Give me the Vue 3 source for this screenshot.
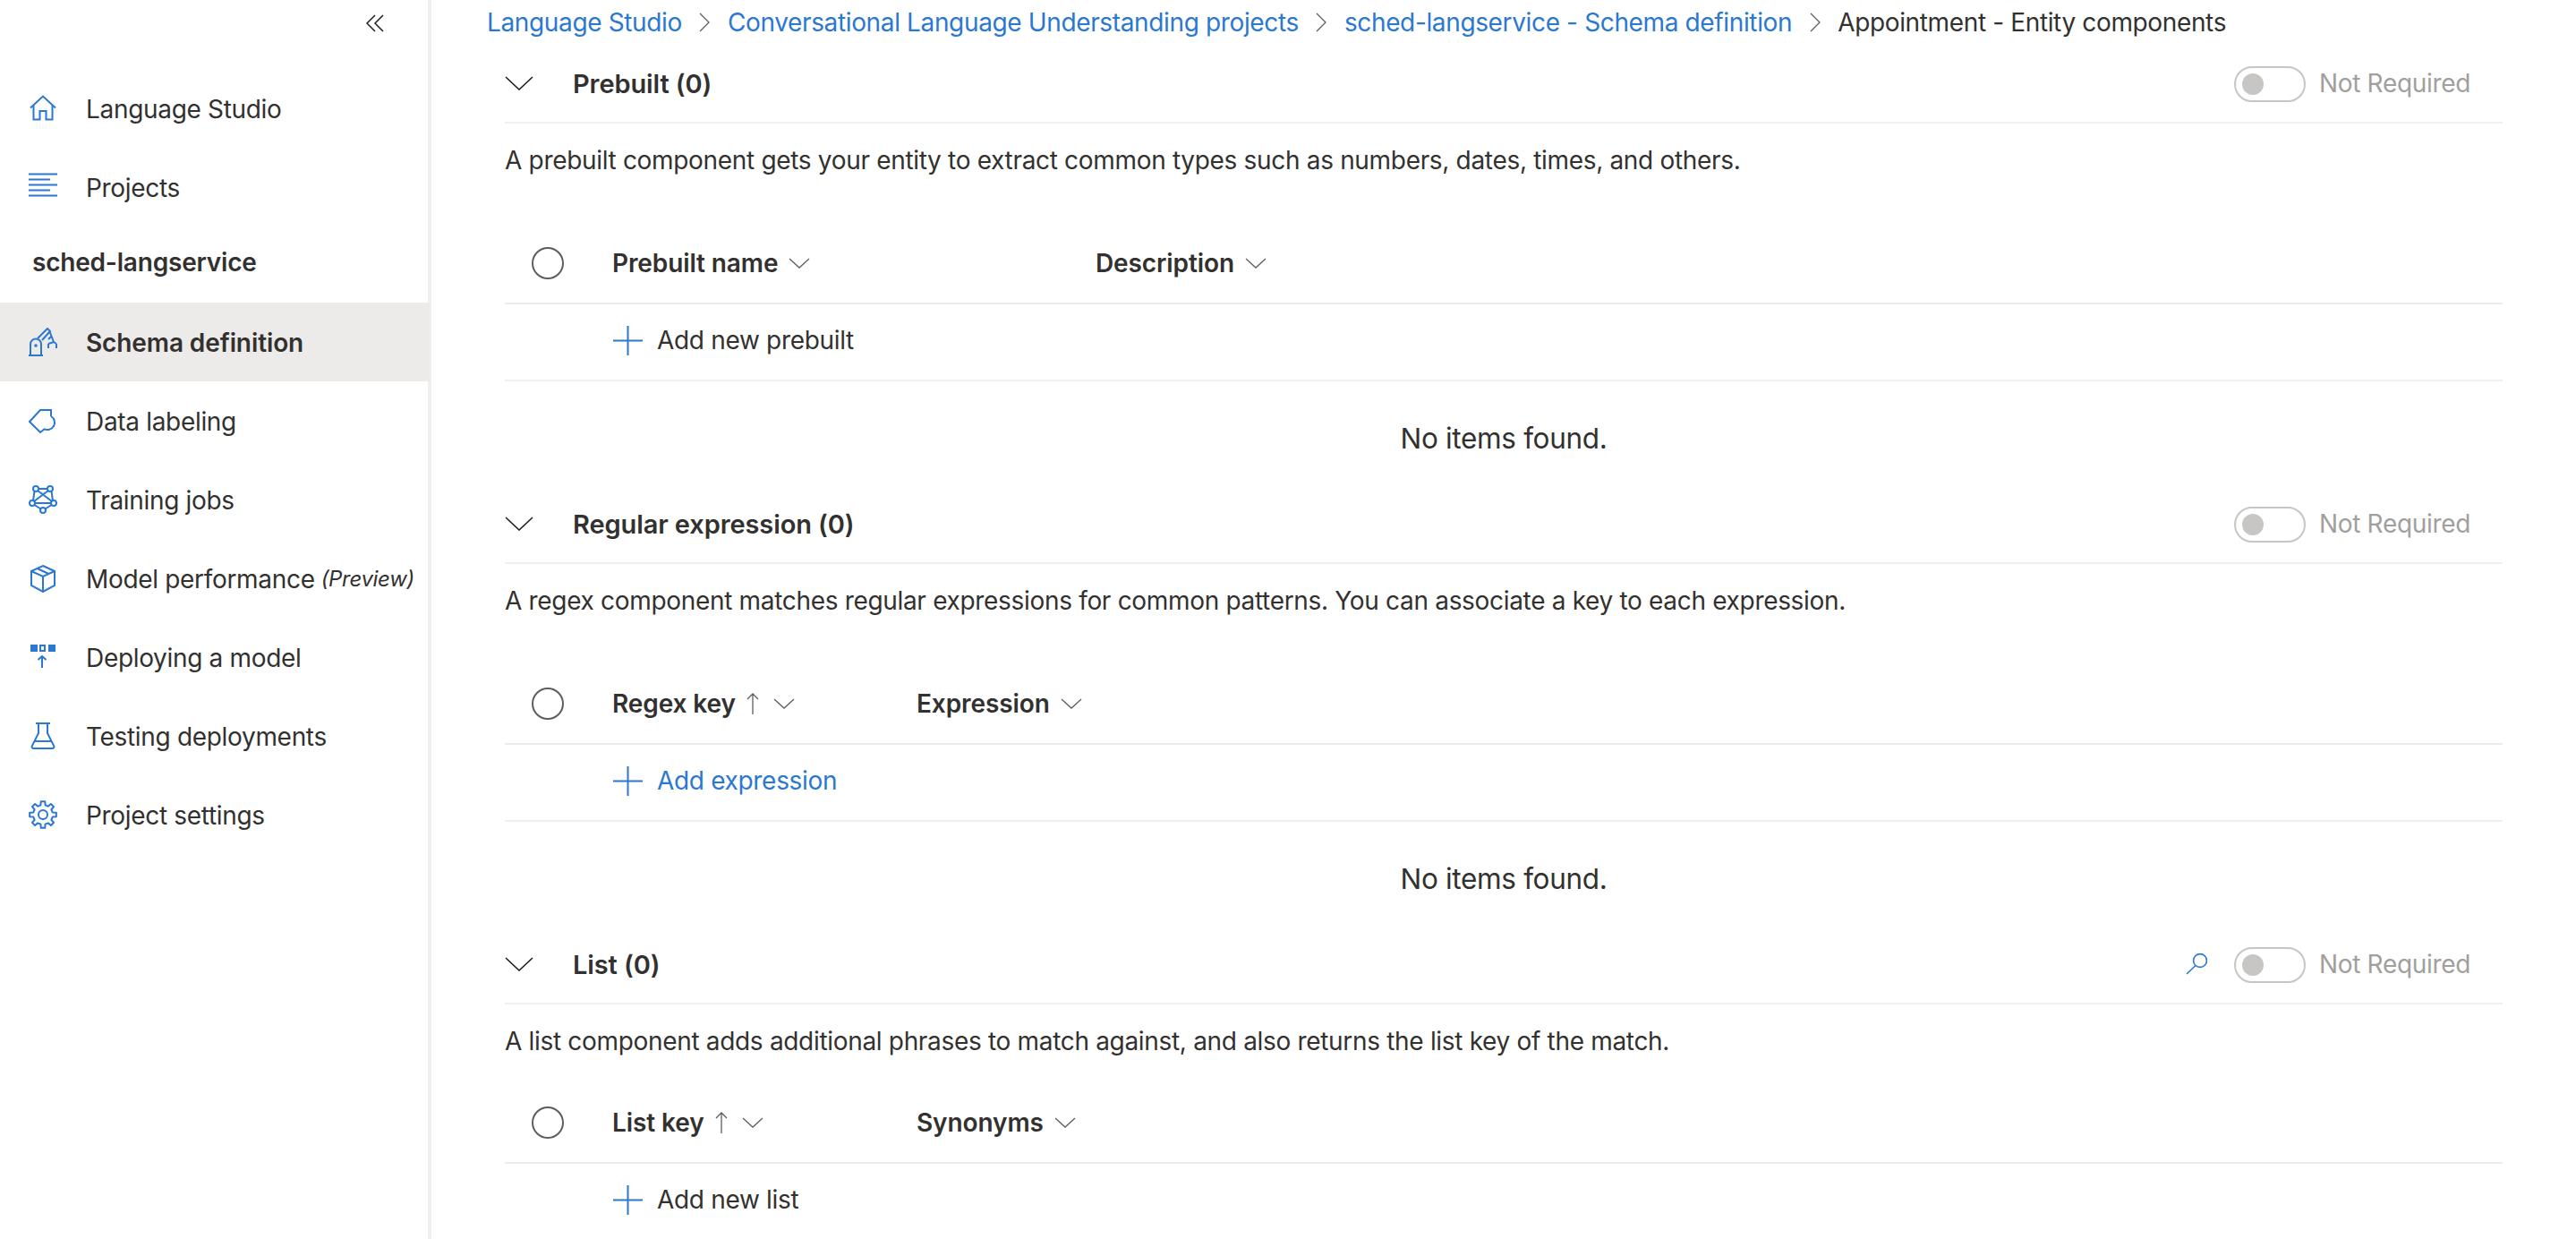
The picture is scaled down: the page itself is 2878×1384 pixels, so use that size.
<script setup>
const crumbs = [
  { label: 'Language Studio', link: true },
  { label: 'Conversational Language Understanding projects', link: true },
  { label: 'sched-langservice - Schema definition', link: true },
  { label: 'Appointment - Entity components', link: false }
]

const topNav = [
  { label: 'Language Studio', icon: 'home' },
  { label: 'Projects', icon: 'list' }
]

const projectNav = [
  { label: 'Schema definition', icon: 'robot', active: true },
  { label: 'Data labeling', icon: 'tag' },
  { label: 'Training jobs', icon: 'network' },
  { label: 'Model performance', icon: 'box', note: '(Preview)' },
  { label: 'Deploying a model', icon: 'deploy' },
  { label: 'Testing deployments', icon: 'flask' },
  { label: 'Project settings', icon: 'gear' }
]

const sections = [
  {
    title: 'Prebuilt (0)',
    desc: 'A prebuilt component gets your entity to extract common types such as numbers, dates, times, and others.',
    cols: [
      { label: 'Prebuilt name', width: 540 },
      { label: 'Description' }
    ],
    add: 'Add new prebuilt',
    empty: true
  },
  {
    title: 'Regular expression (0)',
    desc: 'A regex component matches regular expressions for common patterns. You can associate a key to each expression.',
    cols: [
      { label: 'Regex key', sorted: true, width: 340 },
      { label: 'Expression' }
    ],
    add: 'Add expression',
    addBlue: true,
    empty: true
  },
  {
    title: 'List (0)',
    desc: 'A list component adds additional phrases to match against, and also returns the list key of the match.',
    cols: [
      { label: 'List key', sorted: true, width: 340 },
      { label: 'Synonyms' }
    ],
    add: 'Add new list',
    search: true,
    tight: true
  }
]

// 8 tooth cog outline
const gearPath = (() => {
  const pts = []
  const teeth = 8
  for (let i = 0; i < teeth; i++) {
    const a = (i / teeth) * Math.PI * 2 - Math.PI / 2
    const step = Math.PI / teeth
    const at = (r, t) => `${(16 + r * Math.cos(t)).toFixed(2)} ${(16 + r * Math.sin(t)).toFixed(2)}`
    pts.push(at(15, a - step * 0.38), at(15, a + step * 0.38), at(11, a + step * 0.6), at(11, a + step * 1.4))
  }
  return 'M' + pts.join('L') + 'Z'
})()
</script>

<template>
  <div class="page">
    <aside class="sidebar">
      <div class="collapse">
        <svg class="collapse-icon" width="20" height="20" viewBox="0 0 20 20" fill="none" stroke="#201f1e" stroke-width="1.5">
          <path d="M10 1 1 10l9 9M19 1l-9 9 9 9" />
        </svg>
      </div>
      <template v-for="group in [topNav, null, projectNav]">
        <div v-if="!group" class="project-name">sched-langservice</div>
        <template v-else>
          <div v-for="item in group" :key="item.label" class="nav-item" :class="{ active: item.active }">
            <svg class="nav-icon" width="32" height="32" viewBox="0 0 32 32" fill="none" stroke="#2b78d0" stroke-width="2">
              <template v-if="item.icon === 'home'">
                <path d="M2 15.5 16 2.5l14 13" />
                <path d="M5.5 13v15.5h7V19h7v9.5h7V13" />
              </template>
              <template v-else-if="item.icon === 'list'">
                <path d="M0 1.6h32M0 7.6h24M0 13.6h32M0 19.6h24M0 25.6h32" />
              </template>
              <template v-else-if="item.icon === 'robot'">
                <path d="M0 31h16M2 31V18.500a6 6 0 0 1 6-6 6 6 0 0 1 6 6V31" />
                <circle cx="8" cy="20" r="1.800" fill="#2b78d0" stroke="none" />
                <path d="M10 12 21 1l3 3-9 10M23 3l5 13M22 18l6-2 3 2M22 18v5M31 18v5M25 10l-3 3" />
              </template>
              <template v-else-if="item.icon === 'tag'">
                <path d="M25 11V4H13L1 17l12 12 5-4" />
                <path d="M25 11a8 8 0 1 1-8 14" />
              </template>
              <template v-else-if="item.icon === 'network'">
                <circle cx="8" cy="4" r="3" />
                <circle cx="24" cy="4" r="3" />
                <circle cx="4" cy="20" r="3" />
                <circle cx="28" cy="20" r="3" />
                <circle cx="16" cy="28" r="3" />
                <path d="M11 4h10M6.500 7 5 17M25.500 7 27 17M10 6l16 12M22 6 6 18M7 20h18M6.500 22l7 4.500M25.500 22l-7 4.500" />
              </template>
              <template v-else-if="item.icon === 'box'">
                <path d="M16 2 29 8v16l-13 7-13-7V8z" />
                <path d="M3 8l13 6 13-6M16 14v17M9.500 5 22.500 11" />
              </template>
              <template v-else-if="item.icon === 'deploy'">
                <path d="M2 2h8v8H2zM22 2h8v8h-8z" fill="#2b78d0" stroke="none" />
                <path d="M13 3h5v6h-5z" />
                <path d="M15 28V15M10.500 19 15 15l4.500 4" />
              </template>
              <template v-else-if="item.icon === 'flask'">
                <path d="M8 2h16M11 2v11L3.600 27.500A2 2 0 0 0 5.500 30h21a2 2 0 0 0 1.900-2.500L21 13V2M7 22h18" />
              </template>
              <template v-else>
                <path :d="gearPath" stroke-linejoin="round" />
                <circle cx="16" cy="16" r="5" />
              </template>
            </svg>
            <span class="nav-label">{{ item.label }}</span>
            <em v-if="item.note" class="nav-note">{{ item.note }}</em>
          </div>
        </template>
      </template>
    </aside>

    <main class="main">
      <nav class="breadcrumb">
        <template v-for="(crumb, i) in crumbs" :key="crumb.label">
          <span :class="crumb.link ? 'crumb-link' : 'crumb-current'">{{ crumb.label }}</span>
          <svg v-if="i < crumbs.length - 1" class="crumb-sep" width="12" height="22" viewBox="0 0 12 22" fill="none" stroke="#605e5c" stroke-width="1.3">
            <path d="M1 1l10 10L1 21" />
          </svg>
        </template>
      </nav>

      <section v-for="section in sections" :key="section.title" class="section">
        <header class="section-head">
          <svg class="section-chevron" width="32" height="16" viewBox="0 0 32 16" fill="none" stroke="#201f1e" stroke-width="1.6">
            <path d="M1 1l15 14L31 1" />
          </svg>
          <h2 class="section-title">{{ section.title }}</h2>
          <svg v-if="section.search" class="search-icon" width="24" height="26" viewBox="0 0 24 26" fill="none" stroke="#2b78d0" stroke-width="1.6">
            <circle cx="16" cy="9" r="7.400" />
            <path d="M11 14.500 1 24" />
          </svg>
          <span class="toggle"><span class="toggle-thumb"></span></span>
          <span class="toggle-label">Not Required</span>
        </header>
        <p class="section-desc" :class="{ tight: section.tight }">{{ section.desc }}</p>
        <div class="table-head">
          <span class="check"></span>
          <div
            v-for="col in section.cols"
            :key="col.label"
            class="col"
            :style="col.width ? { width: col.width + 'px' } : null"
          >
            <span>{{ col.label }}</span>
            <svg v-if="col.sorted" class="sort" width="14" height="26" viewBox="0 0 14 26" fill="none" stroke="#605e5c" stroke-width="1.300">
              <path d="M7 25V2M1 8l6-6 6 6" />
            </svg>
            <svg class="col-chevron" width="24" height="12" viewBox="0 0 24 12" fill="none" stroke="#605e5c" stroke-width="1.300">
              <path d="M1 1l11 10L23 1" />
            </svg>
          </div>
        </div>
        <div class="add-row" :class="{ blue: section.addBlue }">
          <svg width="33" height="33" viewBox="0 0 33 33" fill="none" stroke="#2b78d0" stroke-width="2">
            <path d="M16.500 0v33M0 16.500h33" />
          </svg>
          <span>{{ section.add }}</span>
        </div>
        <div v-if="section.empty" class="empty">No items found.</div>
      </section>
    </main>
  </div>
</template>

<style scoped>
.page {
  display: flex;
  height: 1384px;
  overflow: hidden;
  background: #fff;
  color: #323130;
  font-family: Inter, "Noto Sans", sans-serif;
  font-size: 28px;
  letter-spacing: -0.32px;
}

.sidebar {
  flex: 0 0 478px;
  border-right: 4px solid #efeeed;
}

.collapse {
  height: 77px;
  padding: 16px 0 0 409px;
  box-sizing: border-box;
}

.collapse-icon {
  display: block;
}

.nav-item {
  display: flex;
  align-items: center;
  height: 88px;
  padding-left: 32px;
  margin-right: -2px;
}

.nav-item.active {
  background: #edebe9;
  font-weight: 600;
  letter-spacing: -0.1px;
}

.nav-icon {
  flex: none;
  margin-right: 32px;
}

.nav-label {
  padding-top: 1px;
  white-space: nowrap;
}

.nav-note {
  margin-left: 7px;
  font-size: 24px;
}

.project-name {
  height: 85px;
  line-height: 80px;
  padding-left: 36px;
  font-weight: 600;
  letter-spacing: -0.2px;
}

.main {
  flex: 1;
  min-width: 0;
}

.breadcrumb {
  display: flex;
  align-items: center;
  height: 50px;
  padding-left: 62px;
  white-space: nowrap;
  letter-spacing: -0.36px;
}

.crumb-link {
  color: #2b78d0;
}

.crumb-sep {
  margin: 0 19.500px;
}

.section {
  margin: 0 82px 0 82px;
}

.section-head {
  display: flex;
  align-items: center;
  height: 86px;
  border-bottom: 2px solid #f1f0ef;
}

.section-chevron {
  margin-right: 44px;
}

.section-title {
  flex: 1;
  margin: 0;
  font-size: 29px;
  font-weight: 600;
  letter-spacing: -0.1px;
}

.search-icon {
  margin-right: 30px;
}

.toggle {
  display: flex;
  align-items: center;
  box-sizing: border-box;
  width: 80px;
  height: 40px;
  margin-top: 2px;
  padding-left: 7px;
  border: 2px solid #c8c6c4;
  border-radius: 20px;
}

.toggle-thumb {
  width: 24px;
  height: 24px;
  border-radius: 50%;
  background: #c8c6c4;
}

.toggle-label {
  margin: 0 36px 0 15px;
  color: #a19f9d;
}

.section-desc {
  display: flex;
  align-items: center;
  height: 82px;
  margin: 0 0 26px;
  padding-bottom: 4px;
}

.section-desc.tight {
  margin-bottom: 2px;
}

.table-head {
  display: flex;
  align-items: center;
  height: 88px;
  border-bottom: 2px solid #edebe9;
  font-weight: 600;
  letter-spacing: -0.1px;
}

.check {
  flex: none;
  box-sizing: border-box;
  width: 36px;
  height: 36px;
  margin: 0 54px 0 30px;
  border: 2px solid #605e5c;
  border-radius: 50%;
}

.col {
  display: flex;
  align-items: center;
  flex: none;
}

.sort {
  margin: 0 4px 0 12px;
}

.col-chevron {
  margin-left: 12px;
}

.add-row {
  display: flex;
  align-items: center;
  gap: 16px;
  height: 80px;
  padding: 0 0 4px 121px;
  border-bottom: 2px solid #f1f0ef;
}

.add-row.blue {
  color: #2b78d0;
}

.empty {
  display: flex;
  align-items: center;
  justify-content: center;
  height: 116px;
  padding-top: 10px;
  box-sizing: border-box;
  font-size: 31.500px;
}
</style>
